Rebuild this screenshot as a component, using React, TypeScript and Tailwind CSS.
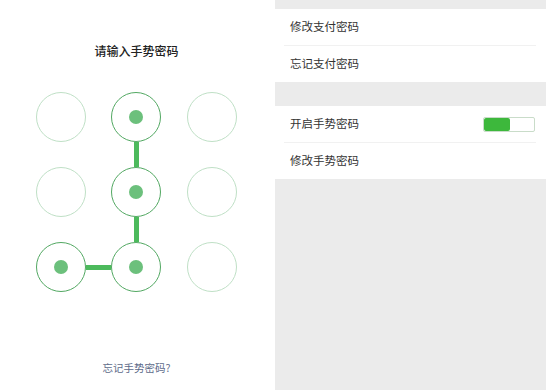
const font = { fontFamily: '"Noto Sans CJK SC", "Noto Sans", sans-serif' }

const selected = [1, 4, 6, 7]

function Dot({ on }: { on: boolean }) {
  return (
    <div
      className={
        on
          ? 'w-[50px] h-[50px] rounded-full border-[1.5px] border-[#52a862] flex items-center justify-center bg-white'
          : 'w-[50px] h-[50px] rounded-full border border-[#bfe0c6] bg-white'
      }
    >
      {on && <div className="w-[14px] h-[14px] rounded-full bg-[#6cc07c]" />}
    </div>
  )
}

function Row({ label, children }: { label: string; children?: React.ReactNode }) {
  return (
    <div className="h-[36px] flex items-center justify-between pl-[15px] pr-[11px]">
      <span className="text-[11.5px] text-[#333]">{label}</span>
      {children}
    </div>
  )
}

function Divider() {
  return <div className="h-px bg-[#f1f1f1] ml-[9px] mr-[10px]" />
}

export default function App() {
  return (
    <div className="w-[552px] h-[390px] flex bg-white overflow-hidden" style={font}>
      <div className="w-[273px] flex flex-col items-center">
        <h1 className="mt-[43px] text-[12px] leading-[16px] font-medium text-[#222]">请输入手势密码</h1>
        <div className="relative mt-[33px] ml-[-1px]">
          <div className="grid grid-cols-3 gap-x-[25.5px] gap-y-[25px]">
            {Array.from({ length: 9 }).map((_, i) => (
              <Dot key={i} on={selected.includes(i)} />
            ))}
          </div>
          <div className="absolute left-[98px] top-[50px] w-[5px] h-[25px] bg-[#4cba5c]" />
          <div className="absolute left-[98px] top-[125px] w-[5px] h-[25px] bg-[#4cba5c]" />
          <div className="absolute left-[50px] top-[172.5px] w-[25.5px] h-[5px] bg-[#4cba5c]" />
        </div>
        <div className="mt-auto mb-[14px] text-[10.5px] text-[#5d6b8a]">忘记手势密码?</div>
      </div>
      <div className="w-[271px] ml-[2px] bg-[#ebebeb] pt-[9px] flex flex-col">
        <div className="bg-white">
          <Row label="修改支付密码" />
          <Divider />
          <Row label="忘记支付密码" />
        </div>
        <div className="bg-white mt-[24px]">
          <Row label="开启手势密码">
            <div className="w-[52px] h-[15px] rounded-[2px] border border-[#c9dcc9] bg-white flex overflow-hidden">
              <div className="w-[26px] h-full bg-[#3db83c] rounded-[2px]" />
            </div>
          </Row>
          <Divider />
          <Row label="修改手势密码" />
        </div>
      </div>
    </div>
  )
}
